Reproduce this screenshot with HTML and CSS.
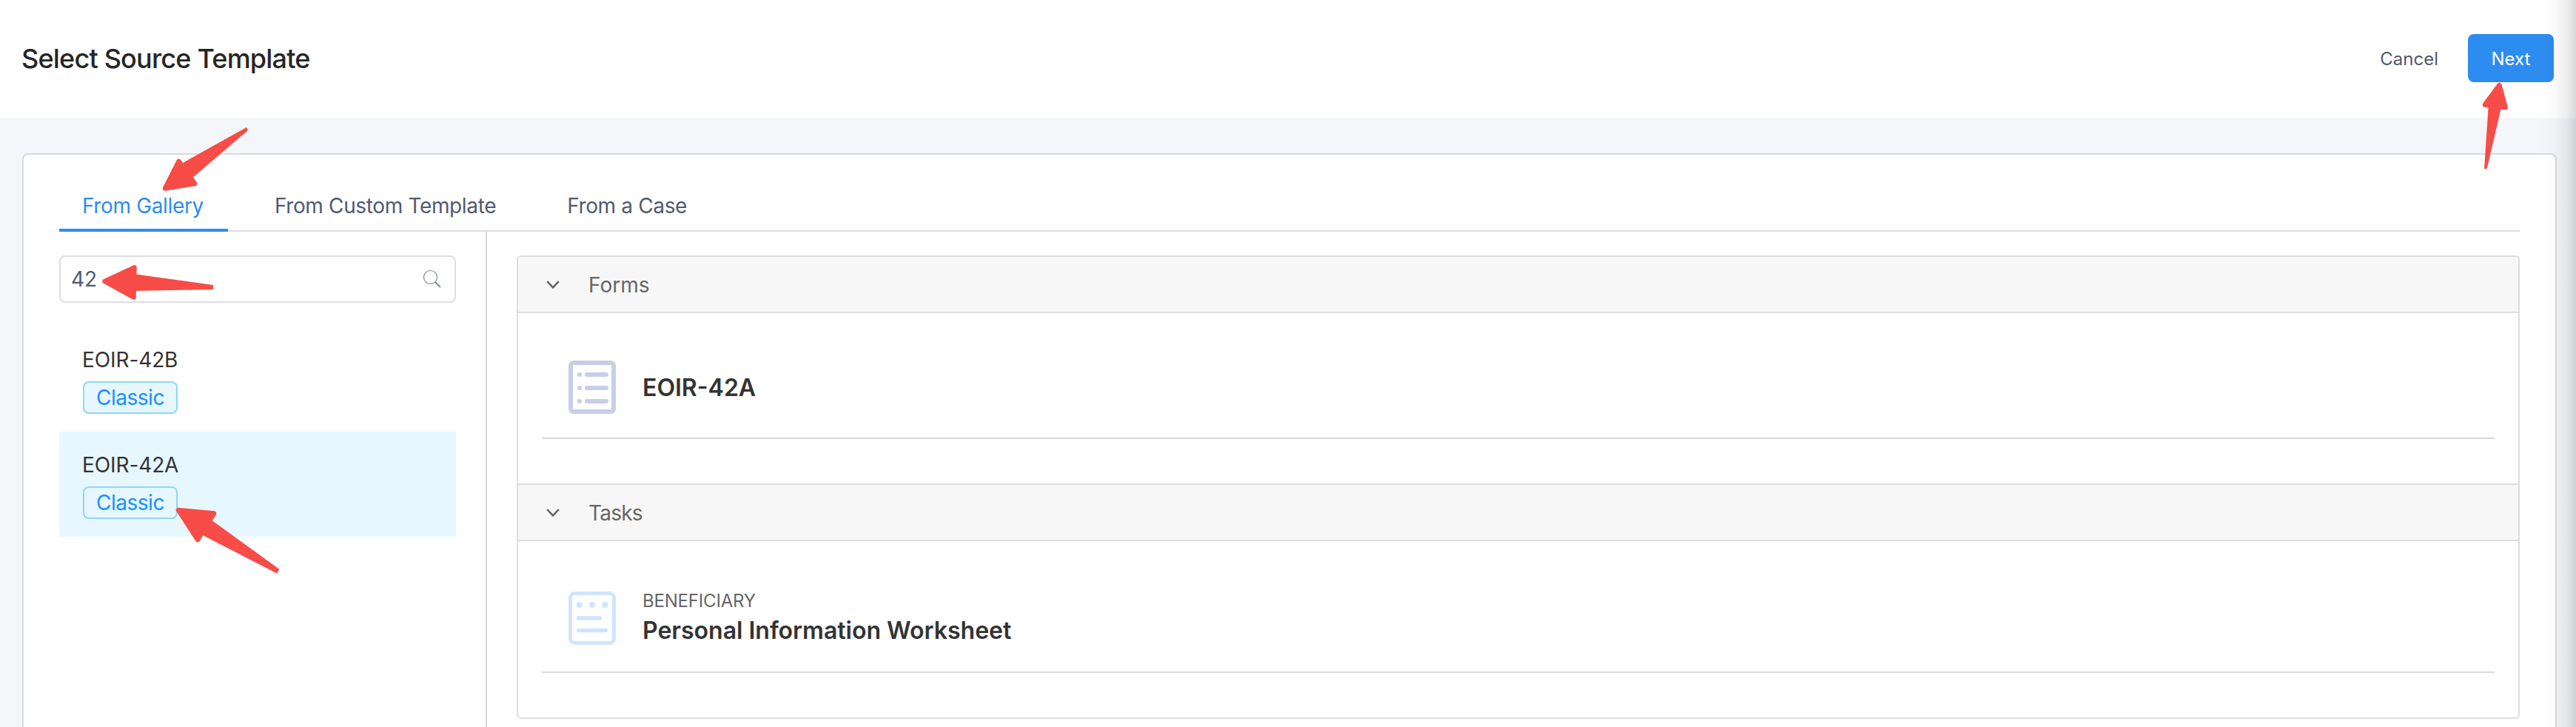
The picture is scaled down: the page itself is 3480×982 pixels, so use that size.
FILE: index.html
```
<!DOCTYPE html>
<html lang="en">
	<head>
		<meta charset="utf-8">
		<title>Select Source Template</title>
		<link rel="stylesheet" href="styles.css">
	</head>
	<body>
		<div id="header">
			<h1>Select Source Template</h1>
			<div class="actions">
				<button class="cancel">Cancel</button>
				<button class="next">Next</button>
			</div>
		</div>

		<div id="card">
			<div class="tabs">
				<div class="tab active">From Gallery</div>
				<div class="tab">From Custom Template</div>
				<div class="tab">From a Case</div>
			</div>
			<div class="content">
				<div class="sidebar">
					<div class="search">
						<span>42</span>
						<svg width="26" height="26" viewBox="0 0 26 26" fill="none" stroke="#808695">
							<circle cx="10.5" cy="10.5" r="9" stroke-width="1.2"/>
							<path d="M17 17l7 7" stroke-width="2"/>
						</svg>
					</div>
					<div class="item">
						<div class="name">EOIR-42B</div>
						<span class="tag">Classic</span>
					</div>
					<div class="item selected">
						<div class="name">EOIR-42A</div>
						<span class="tag">Classic</span>
					</div>
				</div>

				<div class="main">
					<div class="panel">
						<div class="panel-head">
							<svg class="chevron" width="18" height="14" viewBox="0 0 18 14"><path d="M1.2 2.2L9 10.4L16.8 2.2"/></svg>
							<span>Forms</span>
						</div>
						<div class="panel-body">
							<div class="row">
								<svg width="64" height="72" viewBox="0 0 64 72" fill="none" stroke="#c8cdea" stroke-width="6" stroke-linecap="round">
									<rect x="3" y="3" width="58" height="66" rx="4"/>
									<path d="M15 19h.01M25 19h26M15 37h.01M25 37h26M15 55h.01M25 55h26"/>
								</svg>
								<div class="row-title">EOIR-42A</div>
							</div>
						</div>
						<div class="panel-head">
							<svg class="chevron" width="18" height="14" viewBox="0 0 18 14"><path d="M1.2 2.2L9 10.4L16.8 2.2"/></svg>
							<span class="tasks">Tasks</span>
						</div>
						<div class="panel-body">
							<div class="row">
								<svg width="64" height="72" viewBox="0 0 64 72" fill="none" stroke="#d0e5fb" stroke-width="5" stroke-linecap="round">
									<rect x="2.5" y="2.5" width="59" height="67" rx="6"/>
									<path d="M14.6 18h.01M32 18h.01M49.2 18h.01" stroke-width="8"/>
									<path d="M13.5 36h29M13.5 52.5h37" stroke-width="5.5"/>
								</svg>
								<div>
									<div class="role">BENEFICIARY</div>
									<div class="row-title">Personal Information Worksheet</div>
								</div>
							</div>
						</div>
					</div>
				</div>
			</div>
		</div>

		<div id="shade"></div>

		<!-- pointers over the controls to click -->
		<svg id="arrows" width="3480" height="982" viewBox="0 0 3480 982">
			<path d="M223 254.5L241.5 218L263 248Z"/>
			<path class="shaft" d="M247 220L333 172L335 176L259 241Z"/>
			<path d="M141.5 380L181.5 361.5L180.5 401.5Z"/>
			<path class="shaft" d="M180 370L288 385V391L180 393Z"/>
			<path d="M241 689L289 693.5L267 729Z"/>
			<path class="shaft" d="M285 702L377.5 769L374 774.5L272 722Z"/>
			<path d="M3376.5 115L3384.5 145L3357 141.5Z"/>
			<path class="shaft" d="M3361.8 142L3379.3 144L3359.7 228H3356Z"/>
		</svg>
	</body>
</html>
```
FILE: styles.css
```
* {box-sizing: border-box;}
body {
	margin: 0;
	height: 982px;
	overflow: hidden;
	position: relative;
	background: #f4f6fa;
	font: 28px Inter, "Liberation Sans", sans-serif;
	color: #515a6e;
}
svg {
	display: block;
	flex: none;
}
#header {
	display: flex;
	align-items: center;
	justify-content: space-between;
	height: 159px;
	padding: 0 30px 2px 29px;
	background: white;
}
h1 {
	margin: 0;
	font-size: 36px;
	font-weight: 500;
	letter-spacing: -.8px;
	color: #262626;
}
.actions {
	display: flex;
	align-items: center;
}
button {
	border: 0;
	background: none;
	padding: 2px 0 0;
	font: 24px Inter, "Liberation Sans", sans-serif;
	color: #515a6e;
}
.cancel {margin-right: 40px;}
.next {
	width: 116px;
	height: 65px;
	border-radius: 8px;
	background: #2d8cf0;
	color: white;
}
#card {
	margin: 48px 26px 0 30px;
	height: 800px;
	padding: 32px 48px 0;
	border: 2px solid #d9d9d9;
	border-radius: 8px;
	background: white;
}
.tabs {
	display: flex;
	gap: 32px;
	height: 72px;
	border-bottom: 2px solid #dcdee2;
}
.tab {
	height: 72px;
	padding: 6px 33px 0 31px;
	line-height: 62px;
	letter-spacing: -.36px;
}
.tab.active {
	color: #2d8cf0;
	border-bottom: 4px solid #2d8cf0;
}
.content {
	display: flex;
	height: 700px;
}
.sidebar {
	width: 578px;
	padding: 32px 40px 0 0;
	border-right: 2px solid #d9d9d9;
}
.search {
	display: flex;
	align-items: center;
	justify-content: space-between;
	height: 64px;
	margin-bottom: 32px;
	padding: 0 17px 0 14px;
	border: 2px solid #dcdee2;
	border-radius: 8px;
}
.item {
	height: 142px;
	padding: 24px 32px;
	color: #333;
}
.selected {background: #e6f7ff;}
.name {
	line-height: 42px;
	margin: 0 0 8px -1px;
	letter-spacing: -.1px;
}
.tag {
	display: block;
	width: 128px;
	height: 44px;
	line-height: 40px;
	border: 2px solid #91d5ff;
	border-radius: 8px;
	background: #e6f7ff;
	color: #1890ff;
	text-align: center;
	letter-spacing: -.5px;
}
.main {
	flex: 1;
	padding: 32px 0 0 40px;
}
.panel {
	border: 2px solid #dcdee2;
	border-radius: 6px;
	overflow: hidden;
}
.panel-head {
	display: flex;
	align-items: center;
	height: 76px;
	padding: 2px 38px 0;
	border-bottom: 2px solid #dcdee2;
	background: #f7f7f7;
	color: #666;
}
.panel-body + .panel-head {
	height: 78px;
	border-top: 2px solid #dcdee2;
}
.chevron {
	margin-right: 39px;
	fill: none;
	stroke: #666;
	stroke-width: 2.6;
}
.tasks {letter-spacing: -.8px;}
.panel-body {
	height: 230px;
	padding: 32px;
}
.panel-body:last-child {height: 238px;}
.row {
	display: flex;
	align-items: center;
	gap: 36px;
	height: 138px;
	padding-left: 36px;
	border-bottom: 2px solid #d9d9d9;
}
.panel-body:last-child .row {height: 146px;}
.role {
	font-size: 24px;
	line-height: 33px;
	letter-spacing: -.2px;
	color: #666;
}
.row-title {
	font-size: 32px;
	font-weight: 600;
	line-height: 47px;
	color: #333;
}
/* shadow of the neighbouring drawer */
#shade {
	position: absolute;
	top: 0;
	right: 0;
	width: 48px;
	height: 982px;
	background: linear-gradient(to right, rgba(0,0,0,0), rgba(0,0,0,.02) 40%, rgba(0,0,0,.07) 75%, rgba(0,0,0,.15));
}
#arrows {
	position: absolute;
	top: 0;
	left: 0;
	fill: #f74c47;
	stroke: #f74c47;
	stroke-width: 6.5;
	stroke-linejoin: round;
}
#arrows .shaft {stroke: none;}
```
